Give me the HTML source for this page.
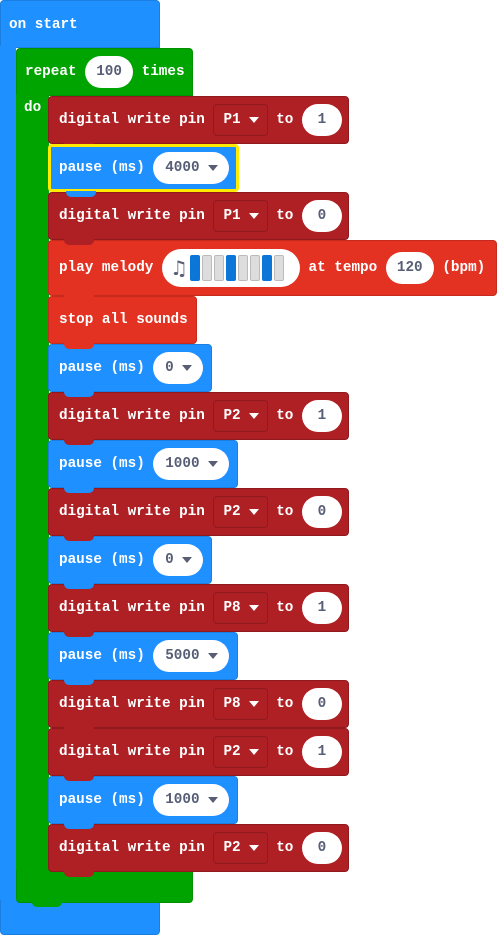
<!DOCTYPE html>
<html><head><meta charset="utf-8"><style>
*{margin:0;padding:0;box-sizing:border-box}
body{width:497px;height:936px;background:#fff;position:relative;overflow:hidden;font-family:"Liberation Mono",monospace;font-weight:bold;font-size:14.3px;color:#fff}
.a{position:absolute}
.blk{position:absolute;display:flex;align-items:center;padding-left:10px;border-radius:4px;white-space:pre}
.r{background:#ae2024;border:1px solid #8e1a1e}
.b{background:#1e90ff;border:1px solid #1a7fe0}
.m{background:#e33122;border:1px solid #c42a1d}
.pill{background:#fff;color:#575e75;border-radius:16px;height:32px;display:inline-flex;align-items:center;justify-content:center}
.dd{height:32px;border:1px solid #8e1a1e;border-radius:4px;display:inline-flex;align-items:center;padding:0 8px 0 9px}
.tri{display:inline-block;width:0;height:0;border-left:5px solid transparent;border-right:5px solid transparent;border-top:6px solid currentColor;margin-left:8px}
.tab{position:absolute;left:15px;width:30px;height:6px;bottom:-6px;border-radius:0 0 5px 5px;z-index:3}
</style></head><body>
<!-- on start -->
<div class="a" style="left:0;top:0;width:160px;height:48px;background:#1e90ff;border-radius:4px 4px 0 0;border:1px solid #1a7fe0;padding:16px 0 0 8px">on start</div>
<div class="a" style="left:0;top:46px;width:16px;height:860px;background:#1e90ff"></div>
<div class="a" style="left:0;top:900px;width:160px;height:35px;background:#1e90ff;border-radius:0 0 4px 4px;border:1px solid #1a7fe0;border-top:none"></div>
<!-- repeat -->
<div class="a" style="left:16px;top:48px;width:177px;height:48px;background:#00a400;border-radius:4px 4px 0 0;border:1px solid #009000;display:flex;align-items:center;padding-left:8px;white-space:pre">repeat <span class="pill" style="width:48px">100</span> times</div>
<div class="a" style="left:16px;top:94px;width:33px;height:790px;background:#00a400;padding:6px 0 0 8px">do</div>
<div class="a" style="left:16px;top:870px;width:177px;height:33px;background:#00a400;border-radius:0 0 4px 4px;border:1px solid #009000;border-top:none"></div>
<div class="a" style="left:32px;top:900px;width:30px;height:7px;background:#00a400;border-radius:0 0 5px 5px"></div>

<div class="blk r" style="left:48px;top:96px;width:301px;height:48px">digital write pin <span class="dd">P1<i class="tri"></i></span> to <span class="pill" style="width:40px;margin-left:0">1</span><div class="tab" style="background:#ae2024"></div></div>
<div class="blk b" style="left:48px;top:144px;width:191px;height:48px;border:3px solid #ffea00;padding-left:8px;z-index:4">pause (ms) <span class="pill" style="width:76px">4000<i class="tri"></i></span><div class="tab" style="background:#1e90ff;bottom:-8px"></div></div>
<div class="blk r" style="left:48px;top:192px;width:301px;height:48px">digital write pin <span class="dd">P1<i class="tri"></i></span> to <span class="pill" style="width:40px">0</span><div class="tab" style="background:#ae2024"></div></div>
<div class="blk m" style="left:48px;top:240px;width:449px;height:56px">play melody <span class="pill" style="width:138px;height:38px;border-radius:19px;justify-content:flex-start;padding-left:8px"><span style="font-size:20px;color:#575e75;font-family:'DejaVu Sans',sans-serif">♫</span><span style="display:inline-flex;gap:2px;margin-left:2px">
<i style="display:block;width:10px;height:26px;border-radius:2px;background:#0c75d8"></i><i style="display:block;width:10px;height:26px;border-radius:2px;background:#ddd;border:1px solid #bbb"></i><i style="display:block;width:10px;height:26px;border-radius:2px;background:#ddd;border:1px solid #bbb"></i><i style="display:block;width:10px;height:26px;border-radius:2px;background:#0c75d8"></i><i style="display:block;width:10px;height:26px;border-radius:2px;background:#ddd;border:1px solid #bbb"></i><i style="display:block;width:10px;height:26px;border-radius:2px;background:#ddd;border:1px solid #bbb"></i><i style="display:block;width:10px;height:26px;border-radius:2px;background:#0c75d8"></i><i style="display:block;width:10px;height:26px;border-radius:2px;background:#ddd;border:1px solid #bbb"></i></span></span> at tempo <span class="pill" style="width:48px">120</span> (bpm)<div class="tab" style="background:#e33122"></div></div>
<div class="blk m" style="left:48px;top:296px;width:149px;height:48px">stop all sounds<div class="tab" style="background:#e33122"></div></div>
<div class="blk b" style="left:48px;top:344px;width:164px;height:48px">pause (ms) <span class="pill" style="width:50px">0<i class="tri"></i></span><div class="tab" style="background:#1e90ff"></div></div>
<div class="blk r" style="left:48px;top:392px;width:301px;height:48px">digital write pin <span class="dd">P2<i class="tri"></i></span> to <span class="pill" style="width:40px">1</span><div class="tab" style="background:#ae2024"></div></div>
<div class="blk b" style="left:48px;top:440px;width:190px;height:48px">pause (ms) <span class="pill" style="width:76px">1000<i class="tri"></i></span><div class="tab" style="background:#1e90ff"></div></div>
<div class="blk r" style="left:48px;top:488px;width:301px;height:48px">digital write pin <span class="dd">P2<i class="tri"></i></span> to <span class="pill" style="width:40px">0</span><div class="tab" style="background:#ae2024"></div></div>
<div class="blk b" style="left:48px;top:536px;width:164px;height:48px">pause (ms) <span class="pill" style="width:50px">0<i class="tri"></i></span><div class="tab" style="background:#1e90ff"></div></div>
<div class="blk r" style="left:48px;top:584px;width:301px;height:48px">digital write pin <span class="dd">P8<i class="tri"></i></span> to <span class="pill" style="width:40px">1</span><div class="tab" style="background:#ae2024"></div></div>
<div class="blk b" style="left:48px;top:632px;width:190px;height:48px">pause (ms) <span class="pill" style="width:76px">5000<i class="tri"></i></span><div class="tab" style="background:#1e90ff"></div></div>
<div class="blk r" style="left:48px;top:680px;width:301px;height:48px">digital write pin <span class="dd">P8<i class="tri"></i></span> to <span class="pill" style="width:40px">0</span><div class="tab" style="background:#ae2024"></div></div>
<div class="blk r" style="left:48px;top:728px;width:301px;height:48px">digital write pin <span class="dd">P2<i class="tri"></i></span> to <span class="pill" style="width:40px">1</span><div class="tab" style="background:#ae2024"></div></div>
<div class="blk b" style="left:48px;top:776px;width:190px;height:48px">pause (ms) <span class="pill" style="width:76px">1000<i class="tri"></i></span><div class="tab" style="background:#1e90ff"></div></div>
<div class="blk r" style="left:48px;top:824px;width:301px;height:48px">digital write pin <span class="dd">P2<i class="tri"></i></span> to <span class="pill" style="width:40px">0</span><div class="tab" style="background:#ae2024"></div></div>
</body></html>
